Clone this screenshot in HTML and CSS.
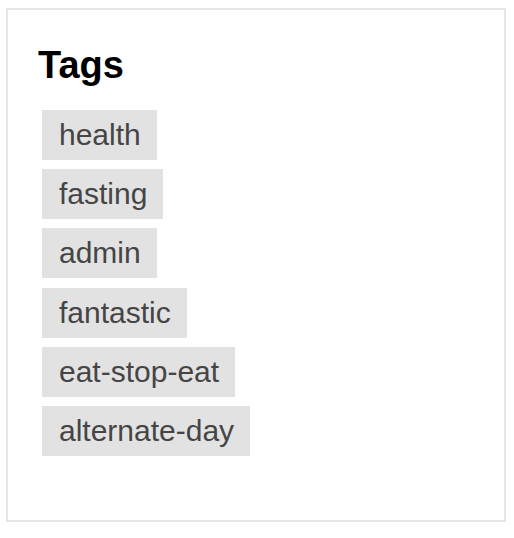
FILE: index.html
```html
<!DOCTYPE html>
<html>
<head>
<meta charset="utf-8">
<link rel="stylesheet" href="styles.css">
</head>
<body>
<section class="card">
  <h2 class="title">Tags</h2>
  <ul class="tags">
    <li class="tag">health</li>
    <li class="tag">fasting</li>
    <li class="tag">admin</li>
    <li class="tag">fantastic</li>
    <li class="tag">eat-stop-eat</li>
    <li class="tag">alternate-day</li>
  </ul>
</section>
</body>
</html>
```
FILE: styles.css
```css
html, body {
  margin: 0;
  padding: 0;
  background: #fff;
}
body {
  font-family: "Liberation Sans", Arial, Helvetica, sans-serif;
}
.card {
  box-sizing: border-box;
  width: 500px;
  height: 514px;
  margin: 8px 0 0 6px;
  border: 2px solid #e6e6e6;
  padding: 33px 30px 0 30px;
}
.title {
  margin: 0;
  font-size: 38px;
  line-height: 44px;
  font-weight: 700;
  color: #000;
}
.tags {
  list-style: none;
  margin: 23px 0 0 4px;
  padding: 0;
  display: flex;
  flex-direction: column;
  align-items: flex-start;
  gap: 9.2px;
}
.tag {
  background: #e2e2e2;
  color: #454545;
  font-size: 30px;
  line-height: 50px;
  height: 50px;
  padding: 0 16px 0 17px;
}
```
